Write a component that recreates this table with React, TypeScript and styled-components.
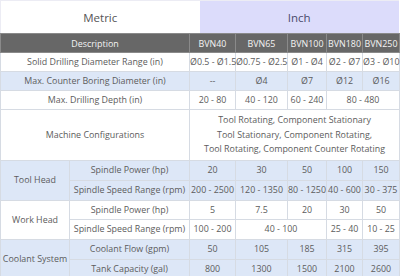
import React from 'react';
import styled, { createGlobalStyle } from 'styled-components';

const GlobalStyle = createGlobalStyle`
  body {
    margin: 0;
    background: #fff;
    font-family: "Open Sans", "DejaVu Sans", sans-serif;
  }
`;

const Page = styled.div`
  width: 399px;
  color: #5c5c5c;
`;

const Tabs = styled.div`
  display: grid;
  grid-template-columns: 1fr 1fr;
  height: 33px;
`;

const Tab = styled.div<{ $active?: boolean }>`
  display: flex;
  align-items: center;
  justify-content: center;
  font-size: 11.5px;
  color: ${(p) => (p.$active ? '#4a4a6a' : '#555')};
  background: ${(p) => (p.$active ? '#dcdcfb' : '#fff')};
  border-top: 1px solid #ececf4;
  border-left: ${(p) => (p.$active ? 'none' : '1px solid #ececf4')};
`;

const Table = styled.table`
  width: 399px;
  border-collapse: collapse;
  table-layout: fixed;
  font-size: 8.9px;
`;

const Th = styled.th`
  background: #676767;
  color: #f4f4f4;
  font-weight: 400;
  height: 18px;
  padding: 0;
  border: 1px solid #8a8a8a;
  white-space: nowrap;
`;

const Row = styled.tr<{ $shade?: boolean }>`
  background: ${(p) => (p.$shade ? '#dde7f7' : '#fff')};
`;

const Td = styled.td<{ $h?: number }>`
  height: ${(p) => p.$h ?? 18}px;
  padding: 0;
  text-align: center;
  white-space: nowrap;
  overflow: visible;
  border: 1px solid #d6dbe3;
  line-height: 14.5px;
`;

const models = ['BVN40', 'BVN65', 'BVN100', 'BVN180', 'BVN250'];

export default function App() {
  return (
    <Page>
      <GlobalStyle />
      <Tabs>
        <Tab>Metric</Tab>
        <Tab $active>Inch</Tab>
      </Tabs>
      <Table>
        <colgroup>
          <col style={{ width: 69 }} />
          <col style={{ width: 120 }} />
          <col style={{ width: 46 }} />
          <col style={{ width: 52 }} />
          <col style={{ width: 39 }} />
          <col style={{ width: 36 }} />
          <col style={{ width: 37 }} />
        </colgroup>
        <thead>
          <tr>
            <Th colSpan={2}>Description</Th>
            {models.map((m) => (
              <Th key={m}>{m}</Th>
            ))}
          </tr>
        </thead>
        <tbody>
          <Row>
            <Td colSpan={2} $h={17}>Solid Drilling Diameter Range (in)</Td>
            <Td>Ø0.5 - Ø1.5</Td>
            <Td>Ø0.75 - Ø2.5</Td>
            <Td>Ø1 - Ø4</Td>
            <Td>Ø2 - Ø7</Td>
            <Td>Ø3 - Ø10</Td>
          </Row>
          <Row $shade>
            <Td colSpan={2}>Max. Counter Boring Diameter (in)</Td>
            <Td>--</Td>
            <Td>Ø4</Td>
            <Td>Ø7</Td>
            <Td>Ø12</Td>
            <Td>Ø16</Td>
          </Row>
          <Row>
            <Td colSpan={2}>Max. Drilling Depth (in)</Td>
            <Td>20 - 80</Td>
            <Td>40 - 120</Td>
            <Td>60 - 240</Td>
            <Td colSpan={2}>80 - 480</Td>
          </Row>
          <Row>
            <Td colSpan={2} $h={50}>
              Machine Configurations
            </Td>
            <Td colSpan={5} $h={50}>
              Tool Rotating, Component Stationary
              <br />
              Tool Stationary, Component Rotating,
              <br />
              Tool Rotating, Component Counter Rotating
            </Td>
          </Row>
          <Row $shade>
            <Td rowSpan={2}>Tool Head</Td>
            <Td $h={19}>Spindle Power (hp)</Td>
            <Td>20</Td>
            <Td>30</Td>
            <Td>50</Td>
            <Td>100</Td>
            <Td>150</Td>
          </Row>
          <Row $shade>
            <Td $h={19}>Spindle Speed Range (rpm)</Td>
            <Td>200 - 2500</Td>
            <Td>120 - 1350</Td>
            <Td>80 - 1250</Td>
            <Td>40 - 600</Td>
            <Td>30 - 375</Td>
          </Row>
          <Row>
            <Td rowSpan={2}>Work Head</Td>
            <Td $h={18}>Spindle Power (hp)</Td>
            <Td>5</Td>
            <Td>7.5</Td>
            <Td>20</Td>
            <Td>30</Td>
            <Td>50</Td>
          </Row>
          <Row>
            <Td $h={19}>Spindle Speed Range (rpm)</Td>
            <Td>100 - 200</Td>
            <Td colSpan={2}>40 - 100</Td>
            <Td>25 - 40</Td>
            <Td>10 - 25</Td>
          </Row>
          <Row $shade>
            <Td rowSpan={2}>Coolant System</Td>
            <Td $h={19}>Coolant Flow (gpm)</Td>
            <Td>50</Td>
            <Td>105</Td>
            <Td>185</Td>
            <Td>315</Td>
            <Td>395</Td>
          </Row>
          <Row $shade>
            <Td $h={17}>Tank Capacity (gal)</Td>
            <Td>800</Td>
            <Td>1300</Td>
            <Td>1500</Td>
            <Td>2100</Td>
            <Td>2600</Td>
          </Row>
        </tbody>
      </Table>
    </Page>
  );
}
